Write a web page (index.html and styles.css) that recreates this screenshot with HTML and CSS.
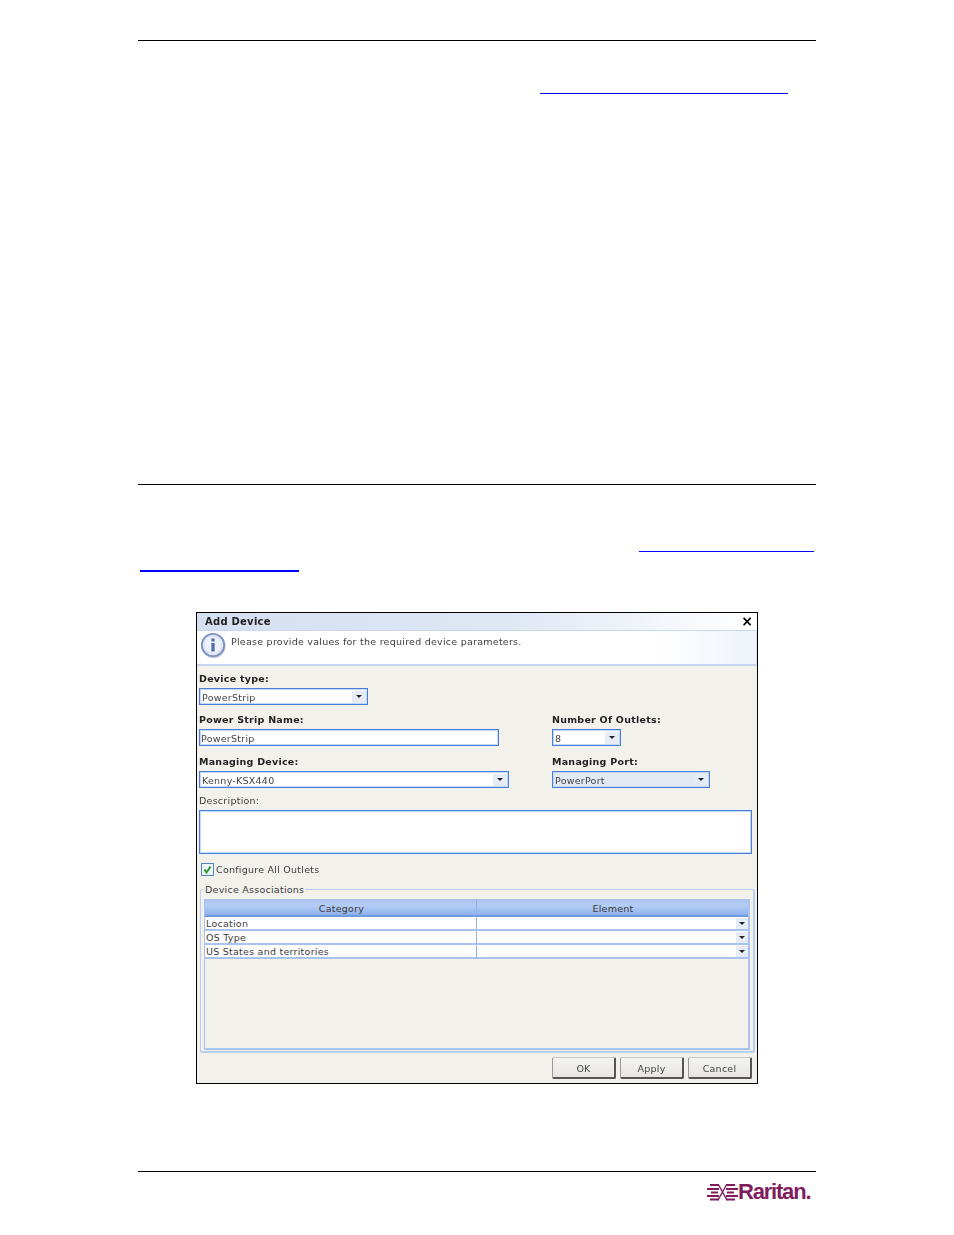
FILE: index.html
```html
<!DOCTYPE html>
<html lang="en">
<head>
<meta charset="utf-8">
<title>Add Device</title>
<link rel="stylesheet" href="styles.css">
</head>
<body>
<div class="page">
  <hr class="rule rule-top">
  <div class="link link-a"></div>
  <hr class="rule rule-mid">
  <div class="link link-b"></div>
  <div class="link link-c"></div>

  <div class="dialog">
    <div class="soft titlebar"><span>Add Device</span><span class="close">×</span></div>
    <div class="soft info">
      <svg class="info-icon" width="26" height="26" viewBox="0 0 26 26">
        <circle cx="13.5" cy="14" r="12" fill="#6f7b96" opacity=".45"/>
        <circle cx="13" cy="13" r="11.2" fill="#dfe7f5" stroke="#7d92c2" stroke-width="1.8"/>
        <circle cx="13" cy="13" r="8" fill="#eef2fa"/>
        <rect x="11.4" y="11" width="3.2" height="8.5" fill="#4f6cab"/>
        <rect x="11.4" y="6.5" width="3.2" height="3" fill="#4f6cab"/>
      </svg>
      <span>Please provide values for the required device parameters.</span>
    </div>
    <div class="soft form">
      <div class="label bold">Device type:</div>
      <div class="field w-type"><span class="val">PowerStrip</span><span class="arrow"></span></div>

      <div class="two-col row-name">
        <div>
          <div class="label bold">Power Strip Name:</div>
          <div class="field w-name"><span class="val">PowerStrip</span></div>
        </div>
        <div>
          <div class="label bold">Number Of Outlets:</div>
          <div class="field w-num"><span class="val">8</span><span class="arrow"></span></div>
        </div>
      </div>

      <div class="two-col row-manage">
        <div>
          <div class="label bold">Managing Device:</div>
          <div class="field w-dev"><span class="val">Kenny-KSX440</span><span class="arrow"></span></div>
        </div>
        <div>
          <div class="label bold">Managing Port:</div>
          <div class="field w-port disabled"><span class="val">PowerPort</span><span class="arrow"></span></div>
        </div>
      </div>

      <div class="label desc-label">Description:</div>
      <div class="textarea"></div>

      <div class="check-row">
        <svg width="13" height="13" viewBox="0 0 13 13">
          <rect x=".5" y=".5" width="12" height="12" fill="#eef4fc" stroke="#4f86c6"/>
          <path d="M3.5 6.5 L5.5 9.5 L9.5 3.5" fill="none" stroke="#2f9a2a" stroke-width="2"/>
        </svg>
        <span>Configure All Outlets</span>
      </div>

      <div class="fieldset">
        <span class="legend">Device Associations</span>
        <div class="table">
          <div class="thead"><div class="cell-a">Category</div><div class="cell-h">Element</div></div>
          <div class="tr"><div class="cell-a">Location</div><div class="cell-b"><span class="arrow"></span></div></div>
          <div class="tr"><div class="cell-a">OS Type</div><div class="cell-b"><span class="arrow"></span></div></div>
          <div class="tr"><div class="cell-a">US States and territories</div><div class="cell-b"><span class="arrow"></span></div></div>
        </div>
      </div>

      <div class="buttons">
        <div class="btn">OK</div>
        <div class="btn">Apply</div>
        <div class="btn">Cancel</div>
      </div>
    </div>
  </div>

  <hr class="rule rule-foot">
  <div class="logo">
    <svg width="31" height="18" viewBox="0 0 31 18">
      <g fill="none" stroke="#7f1d5e">
        <path stroke-width="2" d="M3 2H12M19 2H28M0 6H12M19 6H31M4 9.500H11M20 9.500H27M0 13H12M19 13H31M3 16.500H12M19 16.500H28"/>
        <path stroke-width="1.400" d="M11 1L15.500 9L11 17M20 1L15.500 9L20 17"/>
      </g>
    </svg>
    <span>Raritan.</span>
  </div>
</div>
</body>
</html>
```
FILE: styles.css
```css
* { box-sizing: border-box; }
html, body { margin: 0; padding: 0; background: #fff; }
body { font-family: "DejaVu Sans", sans-serif; color: #333; }
.page { width: 954px; height: 1235px; padding: 40px 138px 0; overflow: hidden; }
.rule { margin: 0; border: 0; height: 1px; background: #000; width: 678px; }
.rule-mid { margin-top: 390px; }
.rule-foot { margin-top: 87px; }
.link { height: 1px; background: #0000ff; }
.link-a { width: 248px; margin: 52px 0 0 402px; }
.link-b { width: 175px; margin: 66px 0 0 501px; }
.link-c { width: 159px; height: 2px; margin: 18px 0 0 2px; }

.dialog { width: 562px; height: 472px; margin: 40px 0 0 58px; border: 1px solid #000; background: #f2f1ec; font-size: 9.5px; letter-spacing: .25px; display: flex; flex-direction: column; }
.soft { filter: blur(.3px); }
.titlebar { height: 17px; flex: none; padding: 0 4px 1px 8px; display: flex; justify-content: space-between; align-items: center; font-size: 10px; font-weight: 700; color: #222; background: linear-gradient(90deg, #d4dff0, #dfe7f4 55%, #fff); }
.close { font-size: 14px; line-height: 14px; color: #000; letter-spacing: 0; }
.info { height: 36px; flex: none; display: flex; align-items: flex-start; background: linear-gradient(90deg, #fff 82%, #eef3fa); border-top: 1px solid #c9d8ef; border-bottom: 2px solid #c7d6ee; border-right: 1px solid #d5e0f2; padding: 1px 0 0 3px; color: #3c3c3c; }
.info-icon { margin: 0 5px 0 0; flex: none; }
.info span { margin-top: 4px; }

.form { flex: 1; padding: 0 2px; position: relative; }
.label { height: 13px; line-height: 13px; margin-bottom: 3px; color: #3c3c3c; }
.bold { font-weight: 700; font-size: 9.5px; color: #222; }
.form > .label:first-child { margin-top: 6px; }
.field { height: 17px; background: #fff; border: 1px solid #4a80dc; box-shadow: inset 0 0 0 1px #c3d6f5; display: flex; align-items: center; justify-content: space-between; padding: 1px 1px 0 2px; color: #444; }
.w-type { width: 169px; }
.w-name { width: 300px; padding-left: 1px; }
.w-num { width: 69px; }
.w-dev { width: 310px; }
.w-port { width: 158px; }
.disabled { background: #e3e9f3; }
.arrow { flex: none; width: 14px; height: 12px; background: #e6ecf5; position: relative; }
.arrow::after { content: ""; position: absolute; left: 3.500px; top: 4px; border: 3.500px solid transparent; border-top-color: #222; border-bottom: 0; }
.two-col { display: grid; grid-template-columns: 353px 1fr; }
.row-name { margin-top: 8px; }
.row-manage { margin-top: 9px; }
.desc-label { margin: 6px 0 3px; }
.textarea { width: 553px; height: 44px; background: #fff; border: 1px solid #4a80dc; box-shadow: inset 0 0 0 1px #c3d6f5; }
.check-row { display: flex; align-items: center; gap: 2px; margin: 9px 0 0 2px; height: 13px; color: #3c3c3c; }

.fieldset { position: relative; margin: 13px 0 0 1px; width: 555px; height: 164px; border: 1px solid #b9cdec; border-width: 1px 2px 2px 1px; border-radius: 2px; padding: 9px 3px 0; }
.legend { position: absolute; left: 3px; top: -7px; height: 13px; line-height: 13px; padding: 0 1px; background: #f2f1ec; color: #3c3c3c; }
.table { width: 546px; height: 151px; border: 1px solid #a9c3ee; border-width: 0 2px 2px 1px; }
.thead, .tr { display: grid; grid-template-columns: 272px 1fr; }
.thead { height: 18px; background: linear-gradient(#a8c3ef, #b4cdf5 40%, #8fb1ec); border-bottom: 2px solid #6f9be0; color: #3c3c3c; text-align: center; line-height: 19px; }
.thead .cell-h { padding-left: 1px; }
.tr { height: 14px; background: #fff; border-bottom: 2px solid #a9c3ee; line-height: 13px; color: #3c3c3c; }
.cell-a { border-right: 1px solid #8fb1ec; padding-left: 1px; }
.thead .cell-a { padding-left: 2px; }
.cell-b { display: flex; justify-content: flex-end; align-items: center; }
.tr .arrow { height: 11px; width: 12px; }
.tr .arrow::after { left: 2.500px; top: 4px; border-width: 3.500px; border-bottom: 0; }

.buttons { position: absolute; right: 5px; bottom: 4px; display: flex; gap: 4px; }
.btn { width: 64px; height: 22px; line-height: 22px; text-align: center; color: #444; background: linear-gradient(#f4f4f2, #e6e5e1); border: 1px solid #c8c8c8; border-left-color: #999; border-right: 2px solid #555; border-bottom: 2px solid #555; border-radius: 2px; }

.logo { display: flex; align-items: center; gap: 0; margin: 9px 0 0 569px; height: 22px; color: #7f1d5e; font-family: "Liberation Sans", sans-serif; font-weight: 700; font-size: 22px; letter-spacing: -1.200px; }
```
